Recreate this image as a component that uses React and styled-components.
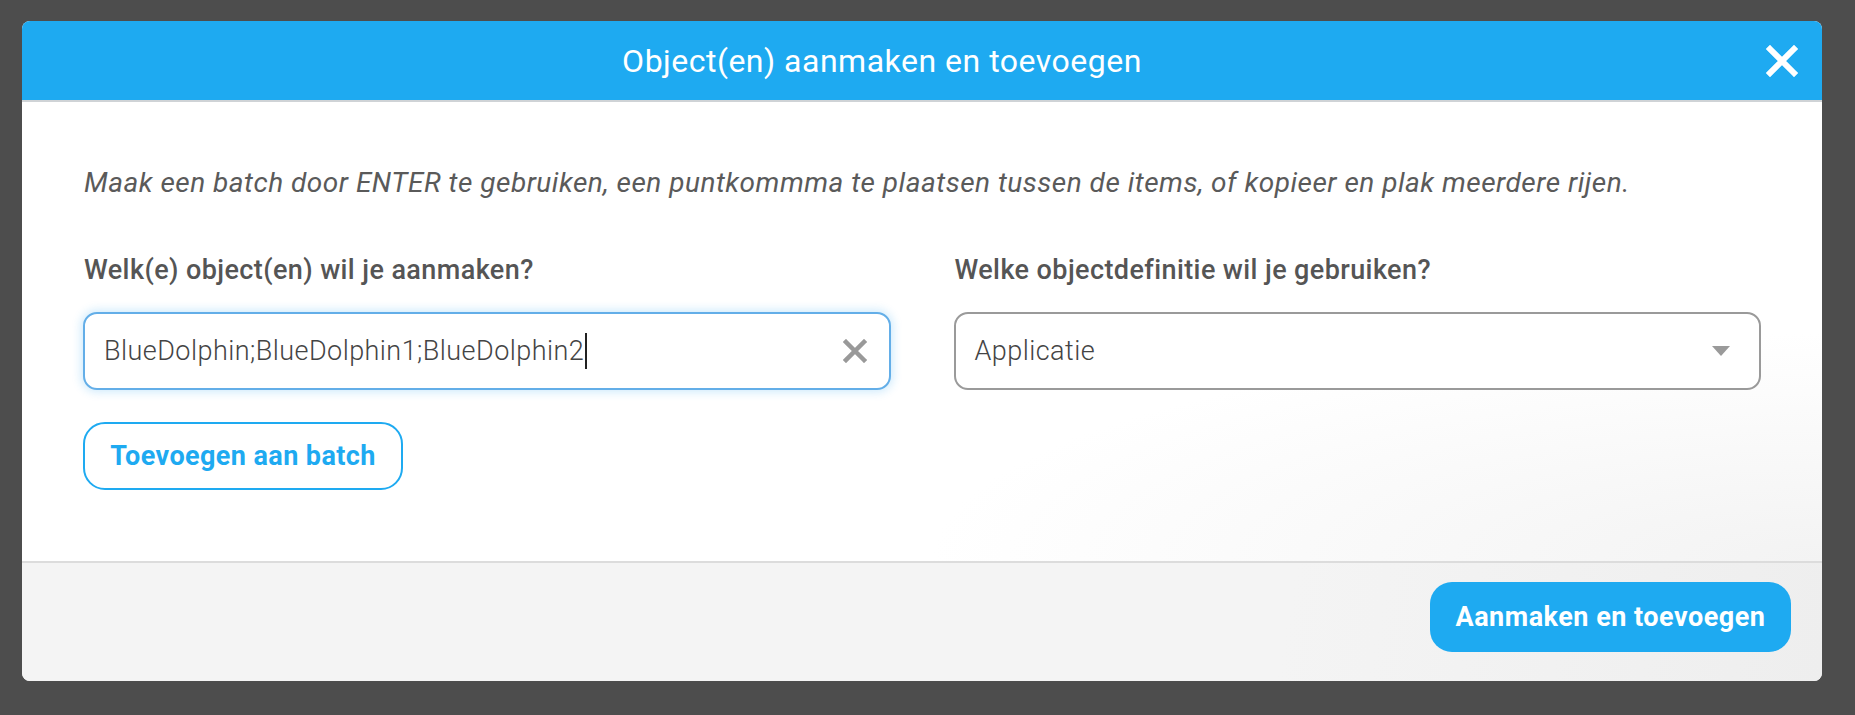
import React from "react";
import styled, { createGlobalStyle } from "styled-components";

const GlobalStyle = createGlobalStyle`
  html, body {
    margin: 0;
    padding: 0;
    background: #4d4d4d;
    font-family: Roboto, "Noto Sans", "Liberation Sans", sans-serif;
  }
  * {
    box-sizing: border-box;
  }
`;

const Page = styled.div`
  width: 1855px;
  height: 715px;
  padding: 21px 33px 34px 22px;
  background: #4d4d4d;
`;

const Modal = styled.div`
  width: 100%;
  height: 100%;
  display: flex;
  flex-direction: column;
  border-radius: 8px;
  overflow: hidden;
  background: #fff;
`;

const Header = styled.header`
  flex: 0 0 81px;
  display: flex;
  align-items: center;
  background: #1eaaf1;
  border-bottom: 2px solid #cfd3d6;
`;

const Title = styled.h2`
  flex: 1;
  margin: 0;
  text-align: center;
  color: #fff;
  font-size: 32px;
  font-weight: 400;
  letter-spacing: 0.5px;
`;

const CloseButton = styled.button`
  flex: 0 0 80px;
  height: 79px;
  display: flex;
  align-items: center;
  justify-content: center;
  padding: 0;
  border: none;
  background: transparent;
  cursor: pointer;
`;

const Body = styled.div`
  flex: 1;
  padding: 64px 61px 0 61px;
  background: radial-gradient(
    ellipse at 100% 100%,
    #f3f3f3 0%,
    #ffffff 35%
  );
`;

const Description = styled.p`
  margin: 0 0 54px 1px;
  color: #5a5a5a;
  font-size: 28px;
  font-style: italic;
  font-weight: 400;
  line-height: 34px;
  letter-spacing: 0.5px;
`;

const Columns = styled.div`
  display: grid;
  grid-template-columns: 1fr 1fr;
  column-gap: 63px;
`;

const Field = styled.div`
  display: flex;
  flex-direction: column;
`;

const Label = styled.label`
  margin: 0 0 26px 1px;
  color: #555;
  font-size: 27px;
  font-weight: 500;
  line-height: 32px;
  letter-spacing: 0.4px;
`;

const InputBox = styled.div`
  height: 78px;
  display: flex;
  align-items: center;
  padding: 0 22px 0 19px;
  border-radius: 14px;
  background: #fff;
  border: 2px solid ${(p) => (p.focused ? "#63aee8" : "#9a9a9a")};
  box-shadow: ${(p) =>
    p.focused ? "0 0 10px 2px rgba(30, 160, 240, 0.22)" : "none"};
`;

const InputText = styled.div`
  flex: 1;
  display: flex;
  align-items: center;
  color: #444;
  font-size: 27px;
  font-weight: 300;
  letter-spacing: 0.45px;
`;

const Caret = styled.span`
  display: inline-block;
  width: 2px;
  height: 36px;
  margin-left: 1px;
  background: #222;
`;

const IconButton = styled.span`
  display: flex;
  align-items: center;
  justify-content: center;
`;

const Triangle = styled.span`
  width: 0;
  height: 0;
  margin-right: 7px;
  border-left: 9px solid transparent;
  border-right: 9px solid transparent;
  border-top: 10px solid #9a9a9a;
`;

const OutlineButton = styled.button`
  align-self: flex-start;
  width: 320px;
  height: 68px;
  margin-top: 32px;
  border: 2px solid #1eaaf1;
  border-radius: 22px;
  background: #fff;
  color: #1eaaf1;
  font-family: inherit;
  font-size: 27px;
  font-weight: 700;
  letter-spacing: 0.4px;
  cursor: pointer;
`;

const Footer = styled.footer`
  flex: 0 0 120px;
  display: flex;
  align-items: flex-start;
  justify-content: flex-end;
  padding: 19px 31px 0 0;
  border-top: 2px solid #dcdcdc;
  background: linear-gradient(100deg, #f4f4f4 70%, #eeeeee 100%);
`;

const PrimaryButton = styled.button`
  width: 361px;
  height: 70px;
  border: none;
  border-radius: 22px;
  background: #1eaaf1;
  color: #fff;
  font-family: inherit;
  font-size: 27px;
  font-weight: 700;
  letter-spacing: 0.5px;
  cursor: pointer;
`;

const CrossIcon = ({ size, color, stroke }) => (
  <svg width={size} height={size} viewBox="0 0 32 32">
    <path
      d="M4 4 L28 28 M28 4 L4 28"
      stroke={color}
      strokeWidth={stroke}
      strokeLinecap="square"
    />
  </svg>
);

export default function App() {
  return (
    <>
      <GlobalStyle />
      <Page>
        <Modal>
          <Header>
            <Title>Object(en) aanmaken en toevoegen</Title>
            <CloseButton aria-label="Sluiten">
              <CrossIcon size={32} color="#fff" stroke={6} />
            </CloseButton>
          </Header>
          <Body>
            <Description>
              Maak een batch door ENTER te gebruiken, een puntkommma te plaatsen
              tussen de items, of kopieer en plak meerdere rijen.
            </Description>
            <Columns>
              <Field>
                <Label>Welk(e) object(en) wil je aanmaken?</Label>
                <InputBox focused>
                  <InputText>
                    BlueDolphin;BlueDolphin1;BlueDolphin2
                    <Caret />
                  </InputText>
                  <IconButton>
                    <CrossIcon size={24} color="#999" stroke={6} />
                  </IconButton>
                </InputBox>
                <OutlineButton>Toevoegen aan batch</OutlineButton>
              </Field>
              <Field>
                <Label>Welke objectdefinitie wil je gebruiken?</Label>
                <InputBox>
                  <InputText>Applicatie</InputText>
                  <Triangle />
                </InputBox>
              </Field>
            </Columns>
          </Body>
          <Footer>
            <PrimaryButton>Aanmaken en toevoegen</PrimaryButton>
          </Footer>
        </Modal>
      </Page>
    </>
  );
}
